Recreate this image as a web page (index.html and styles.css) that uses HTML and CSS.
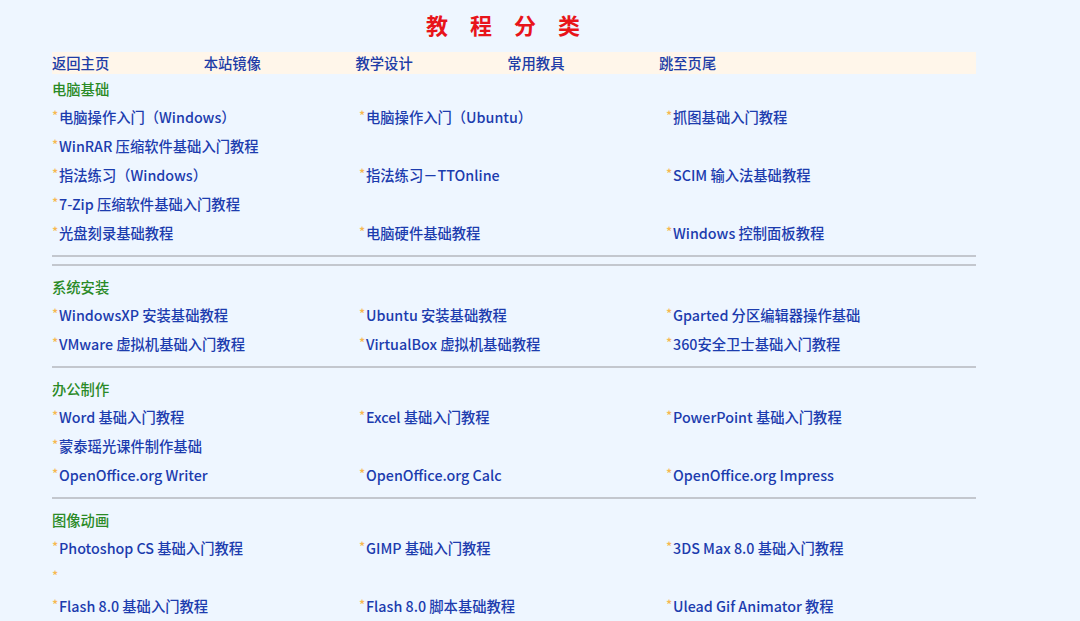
FILE: index.html
```html
<!DOCTYPE html>
<html lang="zh-CN">
<head>
  <meta charset="UTF-8">
  <title>教程分类</title>
  <link rel="stylesheet" href="styles.css">
</head>
<body>
  <div class="page">
    <h1 class="title">教程分类</h1>

    <div class="nav">
      <a href="#">返回主页</a>
      <a href="#">本站镜像</a>
      <a href="#">教学设计</a>
      <a href="#">常用教具</a>
      <a href="#">跳至页尾</a>
    </div>

    <!-- 电脑基础 -->
    <h2 class="cat">电脑基础</h2>
    <ul class="links">
      <li><span class="star">*</span><a href="#">电脑操作入门（Windows）</a></li>
      <li><span class="star">*</span><a href="#">电脑操作入门（Ubuntu）</a></li>
      <li><span class="star">*</span><a href="#">抓图基础入门教程</a></li>
      <li class="wide"><span class="star">*</span><a href="#">WinRAR 压缩软件基础入门教程</a></li>
      <li><span class="star">*</span><a href="#">指法练习（Windows）</a></li>
      <li><span class="star">*</span><a href="#">指法练习－TTOnline</a></li>
      <li><span class="star">*</span><a href="#">SCIM 输入法基础教程</a></li>
      <li class="wide"><span class="star">*</span><a href="#">7-Zip 压缩软件基础入门教程</a></li>
      <li><span class="star">*</span><a href="#">光盘刻录基础教程</a></li>
      <li><span class="star">*</span><a href="#">电脑硬件基础教程</a></li>
      <li><span class="star">*</span><a href="#">Windows 控制面板教程</a></li>
    </ul>
    <div class="rule"></div>
    <div class="rule"></div>

    <!-- 系统安装 -->
    <h2 class="cat">系统安装</h2>
    <ul class="links">
      <li><span class="star">*</span><a href="#">WindowsXP 安装基础教程</a></li>
      <li><span class="star">*</span><a href="#">Ubuntu 安装基础教程</a></li>
      <li><span class="star">*</span><a href="#">Gparted 分区编辑器操作基础</a></li>
      <li><span class="star">*</span><a href="#">VMware 虚拟机基础入门教程</a></li>
      <li><span class="star">*</span><a href="#">VirtualBox 虚拟机基础教程</a></li>
      <li><span class="star">*</span><a href="#">360安全卫士基础入门教程</a></li>
    </ul>
    <div class="rule"></div>

    <!-- 办公制作 -->
    <h2 class="cat">办公制作</h2>
    <ul class="links">
      <li><span class="star">*</span><a href="#">Word 基础入门教程</a></li>
      <li><span class="star">*</span><a href="#">Excel 基础入门教程</a></li>
      <li><span class="star">*</span><a href="#">PowerPoint 基础入门教程</a></li>
      <li class="wide"><span class="star">*</span><a href="#">蒙泰瑶光课件制作基础</a></li>
      <li><span class="star">*</span><a href="#">OpenOffice.org Writer</a></li>
      <li><span class="star">*</span><a href="#">OpenOffice.org Calc</a></li>
      <li><span class="star">*</span><a href="#">OpenOffice.org Impress</a></li>
    </ul>
    <div class="rule"></div>

    <!-- 图像动画 -->
    <h2 class="cat">图像动画</h2>
    <ul class="links">
      <li><span class="star">*</span><a href="#">Photoshop CS 基础入门教程</a></li>
      <li><span class="star">*</span><a href="#">GIMP 基础入门教程</a></li>
      <li><span class="star">*</span><a href="#">3DS Max 8.0 基础入门教程</a></li>
      <li class="wide"><span class="star">*</span></li>
      <li><span class="star">*</span><a href="#">Flash 8.0 基础入门教程</a></li>
      <li><span class="star">*</span><a href="#">Flash 8.0 脚本基础教程</a></li>
      <li><span class="star">*</span><a href="#">Ulead Gif Animator 教程</a></li>
    </ul>
  </div>
</body>
</html>
```

FILE: styles.css
```css
body {
  margin: 0;
  background-color: #eef6ff;
  font-family: "Noto Sans CJK SC", "Noto Sans", sans-serif;
  font-size: 14.3px;
  font-weight: 500;
  color: #1c3cae;
}

a {
  text-decoration: none;
}

.page {
  width: 924px;
  margin-left: 52px;
}

.title {
  margin: 0 0 13px;
  padding-top: 9px;
  height: 30px;
  line-height: 30px;
  font-size: 22px;
  font-weight: bold;
  text-align: center;
  letter-spacing: 1em;
  color: #e8141a;
}

.nav {
  display: grid;
  grid-template-columns: repeat(5, 151.75px);
  height: 22px;
  line-height: 21px;
  margin-bottom: 1px;
  background-color: #fff6ea;
}

.nav a {
  color: #203ca6;
}

.cat {
  margin: 0;
  height: 28px;
  line-height: 28px;
  font-size: 14.3px;
  font-weight: 500;
  color: #2a8a26;
}

.links {
  display: grid;
  grid-template-columns: repeat(3, 307px);
  margin: 0;
  padding: 0;
  list-style: none;
}

.links li {
  height: 29px;
  line-height: 25px;
  white-space: nowrap;
}

.links li.wide {
  grid-column: 1 / -1;
}

.links a {
  color: #1c3cae;
}

.star {
  display: inline-block;
  width: 7px;
  font-size: 13px;
  vertical-align: 2px;
  color: #f6b850;
}

.rule {
  height: 2px;
  margin: 7px 0 7px;
  background-color: #c3c7ce;
}
```
